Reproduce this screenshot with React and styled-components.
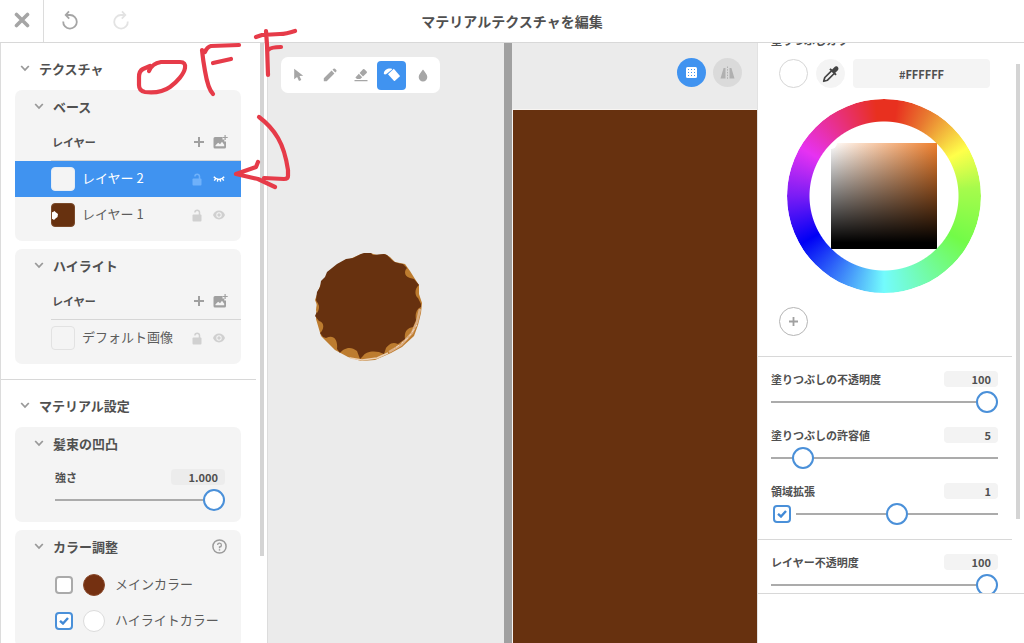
import React, { useState } from "react";
import styled, { createGlobalStyle, css } from "styled-components";

const GlobalStyle = createGlobalStyle`
  *, *::before, *::after { box-sizing: border-box; }
  body {
    margin: 0;
    background: #fff;
    color: #505050;
    font-family: "Noto Sans CJK JP", "Noto Sans", sans-serif;
    font-size: 13px;
  }
  button, input { font: inherit; color: inherit; margin: 0; }
  button { border: 0; padding: 0; background: none; cursor: pointer; }
  h1, h2, h3 { margin: 0; font-weight: 700; }
  svg { display: block; }
`;

const BLUE = "#4093f0";
const BROWN = "#67310f";

/* ---------- page frame ---------- */

const Page = styled.div`
  position: relative;
  display: flex;
  flex-direction: column;
  height: 100vh;
  overflow: hidden;
`;

const Header = styled.header`
  display: grid;
  grid-template-columns: 1fr auto 1fr;
  align-items: center;
  flex: none;
  height: 43px;
  border-bottom: 1px solid #d8d8d8;
`;

const HeaderActions = styled.div`
  display: flex;
  height: 42px;
`;

const HeaderButton = styled.button`
  display: grid;
  place-items: center;
  width: ${(p) => (p.$divided ? 44 : 51)}px;
  padding-bottom: 2px;
  color: ${(p) => (p.disabled ? "#e3e3e3" : "#a5a5a5")};
  ${(p) => p.$divided && css`border-right: 1px solid #dcdcdc;`}
`;

const PageTitle = styled.h1`
  font-size: 14px;
  line-height: 20px;
`;

const Workspace = styled.main`
  flex: 1;
  min-height: 0;
  display: grid;
  grid-template-columns: 268px 27fr 8px 28fr 267px;
`;

/* ---------- left panel ---------- */

const SidePanel = styled.aside`
  display: flex;
  justify-content: space-between;
  min-height: 0;
  overflow: hidden;
  padding-right: 3px;
  border-left: 1px solid #dcdcdc;
  border-right: 1px solid #dcdcdc;
`;

const SideContent = styled.div`
  flex: none;
  width: 255px;
`;

const ScrollThumb = styled.div`
  flex: none;
  width: 4px;
  height: ${(p) => p.$size};
  margin-top: ${(p) => p.$top || 0}px;
  background: #d4d4d4;
`;

const Section = styled.section`
  padding: 8px 15px 15px 14px;
  border-bottom: 1px solid #d8d8d8;
`;

const SectionTitle = styled.h2`
  display: flex;
  align-items: center;
  gap: 9px;
  height: 34px;
  margin-bottom: 5px;
  padding-left: 5px;
  font-size: 13px;
`;

const CardList = styled.div`
  display: flex;
  flex-direction: column;
  gap: 8px;
`;

const Card = styled.div`
  padding-bottom: ${(p) => (p.$fields ? 11 : 8)}px;
  border-radius: 7px;
  background: #f4f4f4;
`;

const CardTitle = styled.h3`
  display: flex;
  align-items: center;
  gap: 9px;
  height: 32px;
  margin-bottom: 2px;
  padding: 0 14px 0 19px;
  font-size: 13px;
`;

const HelpButton = styled.button`
  margin-left: auto;
  color: #9b9b9b;
`;

const LayerHeader = styled.div`
  display: flex;
  align-items: center;
  gap: 5px;
  height: 37px;
  margin-left: 36px;
  padding: 0 13px 0 1px;
  border-bottom: 1px solid #d6d6d6;
  color: #a0a0a0;
`;

const LayerCaption = styled.span`
  flex: 1;
  color: #505050;
  font-size: 11px;
  font-weight: 700;
`;

const LayerRow = styled.div`
  display: flex;
  align-items: center;
  height: 36px;
  padding: 0 14px 0 36px;
  color: ${(p) => (p.$selected ? "#fff" : "#5c5c5c")};
  background: ${(p) => (p.$selected ? BLUE : "transparent")};
`;

const LayerThumb = styled.span`
  width: 24px;
  height: 24px;
  margin-right: 7px;
  overflow: hidden;
  border: 1px solid ${(p) => p.$edge};
  border-radius: 4px;
  background: ${(p) => p.$fill};
`;

const LayerName = styled.span`
  flex: 1;
  font-size: 13px;
  line-height: 20px;
  padding-bottom: 2px;
`;

const IconButton = styled.button`
  display: grid;
  place-items: center;
  width: 16px;
  height: 20px;
  color: ${(p) => p.$tone || "inherit"};
  margin-left: ${(p) => p.$gap || 0}px;
`;

const ColorRow = styled.div`
  display: flex;
  align-items: center;
  gap: 10px;
  height: 36px;
  padding-left: 40px;
  color: #5c5c5c;
`;

const ColorRows = styled.div`
  padding-top: 3px;
`;

const ColorName = styled.label`
  line-height: 20px;
  padding-bottom: 2px;
`;

const ColorDot = styled.button`
  width: 22px;
  height: 22px;
  border: 1px solid ${(p) => p.$edge};
  border-radius: 50%;
  background: ${(p) => p.$fill};
`;

/* ---------- form controls ---------- */

const Field = styled.div`
  display: grid;
  gap: 4px;
`;

const CardField = styled.div`
  padding: 8px 16px 0 40px;
`;

const FieldHead = styled.div`
  display: flex;
  align-items: center;
  justify-content: space-between;
  height: 16px;
`;

const FieldLabel = styled.label`
  font-size: 11px;
  line-height: 16px;
  font-weight: 700;
`;

const NumberBox = styled.input`
  width: 54px;
  height: 16px;
  padding: 0 7px 0 0;
  border: 0;
  border-radius: 4px;
  background: ${(p) => (p.$dark ? "#ececec" : "#f3f3f3")};
  font-size: 11px;
  line-height: 16px;
  font-weight: 700;
  text-align: right;
`;

const SliderLine = styled.div`
  display: flex;
  align-items: center;
  gap: 5px;
  padding-left: ${(p) => (p.$inset ? 2 : 0)}px;
`;

const Slider = styled.input`
  appearance: none;
  flex: 1;
  min-width: 0;
  height: 22px;
  background: transparent;
  &::-webkit-slider-runnable-track {
    height: 2px;
    background: #ababab;
  }
  &::-webkit-slider-thumb {
    appearance: none;
    width: 22px;
    height: 22px;
    margin-top: -10px;
    border: 2px solid #4a90d9;
    border-radius: 50%;
    background: #fff;
  }
`;

const CheckFrame = styled.span`
  display: grid;
  place-items: center;
  flex: none;
  color: #4189d6;
  & > * { grid-area: 1 / 1; }
  & > svg { pointer-events: none; }
`;

const CheckInput = styled.input`
  appearance: none;
  width: 18px;
  height: 18px;
  border: 2px solid #aaa;
  border-radius: 4px;
  background: #fff;
  &:checked { border-color: #4a90d9; }
  &:not(:checked) + svg { visibility: hidden; }
`;

/* ---------- canvases ---------- */

const Canvas = styled.section`
  position: relative;
  min-width: 0;
  padding: 14px 0 0 13px;
  overflow: hidden;
  background: #ebebeb;
`;

const Toolbar = styled.div`
  display: inline-flex;
  align-items: center;
  gap: 2px;
  height: 36px;
  padding: 0 3px;
  border-radius: 7px;
  background: #fff;
`;

const ToolButton = styled.button`
  display: grid;
  place-items: center;
  width: 29px;
  height: 29px;
  border-radius: 4px;
  color: ${(p) => (p.$active ? "#fff" : "#a6a6a6")};
  background: ${(p) => (p.$active ? BLUE : "transparent")};
`;

const Artwork = styled.svg`
  position: absolute;
  left: 44px;
  top: 208px;
`;

const Splitter = styled.div`
  background: #a0a0a0;
`;

const Preview = styled.section`
  display: flex;
  flex-direction: column;
  min-width: 0;
  background: #ebebeb;
`;

const PreviewBar = styled.div`
  display: flex;
  justify-content: flex-end;
  gap: 7px;
  height: 66px;
  padding: 15px 15px 0 0;
`;

const RoundToggle = styled.button`
  display: grid;
  place-items: center;
  width: 29px;
  height: 29px;
  border-radius: 50%;
  color: ${(p) => (p.$active ? "#fff" : "#b0b0b0")};
  background: ${(p) => (p.$active ? BLUE : "#dadada")};
`;

const TextureSurface = styled.div`
  flex: 1;
  border-top: 1px solid #f8f5f2;
  border-left: 1px solid #f8f5f2;
  background: ${BROWN};
`;

/* ---------- right panel ---------- */

const ToolPanel = styled.aside`
  display: flex;
  flex-direction: column;
  min-height: 0;
  border-left: 1px solid #e2e2e2;
`;

const ToolScroll = styled.div`
  display: flex;
  flex: 1;
  min-height: 0;
  overflow: hidden;
  padding-right: 4px;
`;

const ToolContent = styled.div`
  flex: 1;
  margin-right: 4px;
`;

const ToolFooter = styled.div`
  flex: none;
  height: 50px;
  border-top: 1px solid #d8d8d8;
`;

const ColorSection = styled.div`
  margin-top: -11px;
  padding: 0 22px 20px 21px;
  border-bottom: 1px solid #d8d8d8;
`;

const ColorCaption = styled.h2`
  margin: 0 -8px 11px;
  font-size: 11px;
  line-height: 16px;
`;

const ColorBar = styled.div`
  display: flex;
  gap: 8px;
`;

const CircleButton = styled.button`
  display: grid;
  place-items: center;
  flex: none;
  width: 29px;
  height: 29px;
  border: 1px solid ${(p) => p.$edge};
  border-radius: 50%;
  background: ${(p) => p.$fill || "#fff"};
  color: ${(p) => p.$ink || "#a0a0a0"};
`;

const HexInput = styled.input`
  width: 137px;
  height: 29px;
  border: 0;
  border-radius: 4px;
  background: #f4f4f4;
  font-size: 11px;
  font-weight: 700;
  text-align: center;
`;

const WheelBox = styled.div`
  display: grid;
  place-items: center;
  width: 194px;
  height: 194px;
  margin: 11px 0 14px 8px;
  & > * { grid-area: 1 / 1; }
`;

const HueRing = styled.div`
  width: 100%;
  height: 100%;
  border-radius: 50%;
  background: conic-gradient(
    #e8301f 0deg, #e8301f 8deg, #e87a30 28deg, #ffff4a 60deg, #a6fb4c 85deg, #72fb48 120deg,
    #73fbfd 180deg, #0000f5 240deg, #7a1cf5 270deg, #e632f2 300deg, #e8308f 325deg, #e8301f 355deg
  );
  mask: radial-gradient(circle, transparent 74px, #000 75px);
`;

const ShadeSquare = styled.div`
  width: 106px;
  height: 106px;
  background:
    linear-gradient(to bottom, transparent, #000 94%),
    linear-gradient(to right, #fff, #ee7f2d);
`;

const ToolFields = styled.div`
  display: grid;
  gap: 14px;
  padding: 14px 14px 14px 13px;
  border-bottom: 1px solid #d8d8d8;
  &:last-child { border-bottom: 0; }
`;

/* ---------- hand-written note ---------- */

const Scribble = styled.svg`
  position: absolute;
  left: 130px;
  top: 24px;
  pointer-events: none;
`;

/* ---------- icons ---------- */

const Chevron = () => (
  <svg width="10" height="8" viewBox="0 0 10 8" fill="none" stroke="#999" strokeWidth="1.8">
    <path d="M1.2 2 5 6l3.800-4" />
  </svg>
);

const CloseIcon = () => (
  <svg width="16" height="16" viewBox="0 0 16 16" stroke="currentColor" strokeWidth="3.600" strokeLinecap="round">
    <path d="M2.500 2.500 13.500 13.500M13.500 2.500 2.500 13.500" />
  </svg>
);

const TurnIcon = ({ flip }) => (
  <svg width="18" height="20" viewBox="0 0 18 20" fill="none" stroke="currentColor" strokeWidth="1.800">
    <g transform={flip ? "translate(18 0) scale(-1 1)" : undefined}>
      <path d="M2.200 11.500A6.800 6.800 0 1 0 9 5H5.500" />
      <path d="M8 1.400 4.700 5 8.200 8.600" />
    </g>
  </svg>
);

const PlusIcon = ({ size = 10 }) => (
  <svg width={size} height={size} viewBox="0 0 10 10" stroke="currentColor" strokeWidth="2">
    <path d="M5 0v10M0 5h10" />
  </svg>
);

const ImageAddIcon = () => (
  <svg width="15" height="14" viewBox="0 0 15 14" fill="currentColor">
    <path fillRule="evenodd" d="M2 2h7.500v2.500h1.800v2H13V12a1.500 1.500 0 0 1-1.500 1.500H2A1.500 1.500 0 0 1 .5 12V3.500A1.500 1.500 0 0 1 2 2ZM2.500 11.300h8.700V9.800L9 6.800l-2 2.500-1.800-1.500-2.700 2.500Z" />
    <path d="M11.500 0h1.200v1.900h2v1.200h-2V5h-1.200V3.100h-2V1.900h2z" />
  </svg>
);

const LockIcon = () => (
  <svg width="10" height="13" viewBox="0 0 10 13">
    <rect x="0.500" y="5.500" width="9" height="7" rx="1" fill="currentColor" />
    <path d="M7.500 6V3.500a2.300 2.300 0 0 0-4.600 0" fill="none" stroke="currentColor" strokeWidth="1.500" />
  </svg>
);

const EyeIcon = () => (
  <svg width="12" height="10" viewBox="0 0 12 10" fill="currentColor">
    <path fillRule="evenodd" d="M6 .6C3.200.6 1 2.400 0 5c1 2.600 3.200 4.400 6 4.400S11 7.600 12 5C11 2.400 8.800.6 6 .6Zm0 7.100a2.700 2.700 0 1 1 0-5.400 2.700 2.700 0 0 1 0 5.400Z" />
    <circle cx="6" cy="5" r="1.700" />
  </svg>
);

const EyeClosedIcon = () => (
  <svg width="12" height="10" viewBox="0 0 12 10" fill="none" stroke="currentColor" strokeWidth="1.400">
    <path d="M.8 2.800C3.500 6.200 8.500 6.200 11.200 2.800M2.600 4.600 1.300 6.600M9.400 4.600l1.300 2M4.800 5.400 4.400 7.600M7.200 5.400l.4 2.200" />
  </svg>
);

const HelpIcon = () => (
  <svg width="15" height="15" viewBox="0 0 15 15" fill="none" stroke="currentColor" strokeWidth="1.500">
    <circle cx="7.500" cy="7.500" r="6.600" />
    <path d="M5.600 6A1.900 1.900 0 1 1 7.500 8v1.200" strokeWidth="1.300" />
    <path d="M7.500 10.200v1.400" strokeWidth="1.400" />
  </svg>
);

const TickIcon = () => (
  <svg width="10" height="8" viewBox="0 0 10 8" fill="none" stroke="currentColor" strokeWidth="2.400">
    <path d="M1 3.800 4 6.500 9 1" />
  </svg>
);

const CursorIcon = () => (
  <svg width="11" height="14" viewBox="0 0 11 14" fill="currentColor">
    <path d="M1.200.8v10.400l2.900-2.300L6 13l2.300-1-1.800-3.900 3.700-.3Z" />
  </svg>
);

const PencilIcon = () => (
  <svg width="14" height="14" viewBox="0 0 14 14" fill="currentColor">
    <path d="M.8 13.200V10.300L8.600 2.600l2.800 2.800L3.700 13.200ZM9.500 1.700l1-1q.8-.6 1.500 0l1.300 1.300q.6.8 0 1.500l-1 1Z" />
  </svg>
);

const EraserIcon = () => (
  <svg width="14" height="14" viewBox="0 0 14 14" fill="currentColor">
    <path d="M5.600 5 9 1.300q.7-.6 1.400 0l2.300 2.300q.6.700 0 1.400L9 8.500ZM4.800 5.800 8.200 9.200 6.200 11H3L1.400 9.400ZM.5 12h13v1.300H.5Z" />
  </svg>
);

const BucketIcon = () => (
  <svg width="18" height="16" viewBox="0 0 18 16" fill="currentColor">
    <path d="m10.800 1.800 5.800 6.600q.5.600 0 1.100l-4.600 4.300q-.6.500-1.100 0L5 7.300Z" />
    <path d="M9.200 1.900C5.500.7 1.200 2.600.8 6.300c0 1.200 1.400 1.500 2.600.8L8.800 2.700Z" />
  </svg>
);

const DropIcon = () => (
  <svg width="10" height="13" viewBox="0 0 10 13" fill="currentColor">
    <path d="M5 .5C3.400 3 .7 5.200.7 8.100a4.300 4.300 0 0 0 8.600 0C9.300 5.200 6.600 3 5 .5Z" />
  </svg>
);

const GridIcon = () => (
  <svg width="11" height="11" viewBox="0 0 11 11">
    <rect width="11" height="11" rx="1.500" fill="currentColor" />
    {[2, 5, 8].map((x) =>
      [2, 5, 8].map((y) => <rect key={`${x}-${y}`} x={x} y={y} width="1" height="1" fill={BLUE} />)
    )}
  </svg>
);

const MirrorIcon = () => (
  <svg width="15" height="14" viewBox="0 0 15 14" fill="currentColor">
    <path d="M5.500 2v10.500H.5L3.600 2ZM9.500 2v10.500h5L11.400 2Z" />
    <path d="M7.500.5v13.500" stroke="currentColor" strokeWidth="1" strokeDasharray="1.500 1.200" />
  </svg>
);

const DropperIcon = () => (
  <svg width="18" height="18" viewBox="0 0 18 18">
    <path d="M9.500 5.800 2.800 12.500 1.700 16.300 5.500 15.200 12.200 8.500" fill="none" stroke="currentColor" strokeWidth="1.700" strokeLinejoin="round" />
    <path d="m7.300 4.600 1.300-1.300 1.500 1.300 2.500-2.600c2-2 5.200 1.100 3.300 3.200l-2.600 2.600 1.400 1.500-1.300 1.300Z" fill="currentColor" />
  </svg>
);

const BittenThumb = () => (
  <svg width="22" height="22" viewBox="0 0 22 22" fill="#fff">
    <path d="M-1 8.500 1 8 2.500 7 4 8.500 6 10 5.500 13 3.500 14.500 2 16 .5 15-1 15Z" />
  </svg>
);

const MochiArt = () => (
  <Artwork width="112" height="112" viewBox="312 251 112 112" aria-hidden="true">
    <path fill="#bd7c2f" d="M361 254 370 253 377 255 385 254 390 257 395 262 405 264 410 271 415 279 419 285 419 294 422 303 421 313 418 325 414 336 402 347 391 353 375 360 361 361 348 357 335 350 321 336 316 319 317 305 315 300 320 286 328 273 341 263Z" />
    <g fill="none" stroke="#dcae82" strokeLinejoin="round">
      <path d="M420 309 417 322 412 333 401 345 389 352" strokeWidth="2.500" />
      <path d="M388 353 377 358 362 360 350 358" stroke="#ecd0b2" strokeWidth="1.500" />
      <path d="M417 325 408 338 394 349" stroke="#f0d6c0" strokeWidth="1" strokeDasharray="2 3 4 2" />
    </g>
    <path fill={BROWN} d="M361 254 364 253 371 253 373 255 384 254 387 255 392 260C395 263 398 263 403 264L407 268C404 271 404 276 410 278L414 279 419 285C415 288 414 295 418 298L421 304 421 307C416 309 415 315 416 320L413 327C407 328 404 332 405 339L398 344C391 341 388 346 386 348L384 354C375 349 365 352 363 356L360 359 357 351C350 345 343 349 340 353L337 349C338 340 334 334 326 338L323 337 320 333C324 330 325 322 319 321L315 316 319 307 316 300 317 292 320 287 321 281 325 277 327 272 337 264 346 259 353 258Z" />
    <path d="M317 302c2 2 3 7 0 11l-1-3Z" fill="#bd7c2f" />
  </Artwork>
);

const NoteMarks = () => (
  <Scribble width="172" height="170" viewBox="130 24 172 170" fill="none" stroke="#e63b49" strokeWidth="4.200" strokeLinecap="round" strokeLinejoin="round" aria-hidden="true">
    <path d="M149 71C151 66 155 63 161 62L180 62Q186 62 185 68C184 74 177 82 170 87 163 92 154 93 145 92Q139 91 139 85L139 77Q139 71 143 69L150 66" />
    <path d="M202 50Q203 60 205 71 208 89 213 94M205 52Q207 47 211 46L239 45M213 63 231 59" />
    <path d="M266 31 267 45 268 75M256 37 262 35 280 34Q286 34 295 31M268 50Q271 47 281 47" />
    <path d="M259 117Q271 126 278 138 285 150 288 170L288 176Q288 179 284 179L264 178" />
    <path d="M258 162 256 167 236 174 258 179 275 187" />
  </Scribble>
);

/* ---------- composed controls ---------- */

function RangeField({ id, label, initial, min = 0, max, step = 1, digits = 0, dark, toggle }) {
  const [value, setValue] = useState(initial);
  const [enabled, setEnabled] = useState(true);
  const update = (e) => setValue(Number(e.target.value) || 0);
  return (
    <Field>
      <FieldHead>
        <FieldLabel htmlFor={id}>{label}</FieldLabel>
        <NumberBox $dark={dark} aria-label={label} value={value.toFixed(digits)} onChange={update} />
      </FieldHead>
      <SliderLine $inset={toggle}>
        {toggle && (
          <CheckFrame>
            <CheckInput type="checkbox" aria-label={label} checked={enabled} onChange={() => setEnabled(!enabled)} />
            <TickIcon />
          </CheckFrame>
        )}
        <Slider id={id} type="range" min={min} max={max} step={step} value={value} onChange={update} />
      </SliderLine>
    </Field>
  );
}

function ColorOption({ id, label, fill, edge, on }) {
  const [checked, setChecked] = useState(on);
  return (
    <ColorRow>
      <CheckFrame>
        <CheckInput id={id} type="checkbox" checked={checked} onChange={() => setChecked(!checked)} />
        <TickIcon />
      </CheckFrame>
      <ColorDot $fill={fill} $edge={edge} aria-label={`${label}を選択`} />
      <ColorName htmlFor={id}>{label}</ColorName>
    </ColorRow>
  );
}

function Layer({ name, fill, edge, selected, hidden, children }) {
  return (
    <LayerRow $selected={selected}>
      <LayerThumb $fill={fill} $edge={edge}>{children}</LayerThumb>
      <LayerName>{name}</LayerName>
      <IconButton aria-label="ロック" $tone={selected ? "#6fb1fa" : "#d0d0d0"}><LockIcon /></IconButton>
      <IconButton aria-label="表示" $gap={6} $tone={selected ? "#fff" : "#d0d0d0"}>
        {hidden ? <EyeClosedIcon /> : <EyeIcon />}
      </IconButton>
    </LayerRow>
  );
}

function LayerCard({ title, children }) {
  return (
    <Card>
      <CardTitle><Chevron />{title}</CardTitle>
      <LayerHeader>
        <LayerCaption>レイヤー</LayerCaption>
        <IconButton aria-label="レイヤーを追加"><PlusIcon /></IconButton>
        <IconButton aria-label="画像を追加"><ImageAddIcon /></IconButton>
      </LayerHeader>
      {children}
    </Card>
  );
}

const TOOLS = [
  ["選択", CursorIcon],
  ["ペン", PencilIcon],
  ["消しゴム", EraserIcon],
  ["塗りつぶし", BucketIcon],
  ["ぼかし", DropIcon],
];

export default function App() {
  const [tool, setTool] = useState("塗りつぶし");
  const [hex, setHex] = useState("#FFFFFF");
  return (
    <Page>
      <GlobalStyle />
      <Header>
        <HeaderActions>
          <HeaderButton $divided aria-label="閉じる"><CloseIcon /></HeaderButton>
          <HeaderButton aria-label="元に戻す"><TurnIcon /></HeaderButton>
          <HeaderButton aria-label="やり直す" disabled><TurnIcon flip /></HeaderButton>
        </HeaderActions>
        <PageTitle>マテリアルテクスチャを編集</PageTitle>
      </Header>

      <Workspace>
        <SidePanel>
          <SideContent>
            <Section>
              <SectionTitle><Chevron />テクスチャ</SectionTitle>
              <CardList>
                <LayerCard title="ベース">
                  <Layer name="レイヤー 2" fill="#f4f4f4" edge="#e6edf5" selected hidden />
                  <Layer name="レイヤー 1" fill={BROWN} edge="#7a4a2a"><BittenThumb /></Layer>
                </LayerCard>
                <LayerCard title="ハイライト">
                  <Layer name="デフォルト画像" fill="#f4f4f4" edge="#e2e2e2" />
                </LayerCard>
              </CardList>
            </Section>
            <Section>
              <SectionTitle><Chevron />マテリアル設定</SectionTitle>
              <CardList>
                <Card $fields>
                  <CardTitle><Chevron />髪束の凹凸</CardTitle>
                  <CardField>
                    <RangeField id="strength" label="強さ" initial={1} max={1} step={0.001} digits={3} dark />
                  </CardField>
                </Card>
                <Card>
                  <CardTitle>
                    <Chevron />カラー調整
                    <HelpButton aria-label="ヘルプ"><HelpIcon /></HelpButton>
                  </CardTitle>
                  <ColorRows>
                    <ColorOption id="main-color" label="メインカラー" fill="#743011" edge="#8a4a2c" on={false} />
                    <ColorOption id="highlight-color" label="ハイライトカラー" fill="#fff" edge="#dcdcdc" on />
                  </ColorRows>
                </Card>
              </CardList>
            </Section>
          </SideContent>
          <ScrollThumb $size="calc(100% - 87px)" />
        </SidePanel>

        <Canvas>
          <Toolbar>
            {TOOLS.map(([name, Icon]) => (
              <ToolButton key={name} aria-label={name} $active={tool === name} onClick={() => setTool(name)}>
                <Icon />
              </ToolButton>
            ))}
          </Toolbar>
          <MochiArt />
        </Canvas>
        <Splitter />
        <Preview>
          <PreviewBar>
            <RoundToggle $active aria-label="グリッド"><GridIcon /></RoundToggle>
            <RoundToggle aria-label="左右対称"><MirrorIcon /></RoundToggle>
          </PreviewBar>
          <TextureSurface />
        </Preview>

        <ToolPanel>
          <ToolScroll>
            <ToolContent>
              <ColorSection>
                <ColorCaption>塗りつぶしカラー</ColorCaption>
                <ColorBar>
                  <CircleButton $edge="#d6d6d6" aria-label="現在の色" />
                  <CircleButton $edge="#f4f4f4" $fill="#f4f4f4" $ink="#444" aria-label="スポイト"><DropperIcon /></CircleButton>
                  <HexInput aria-label="カラーコード" value={hex} onChange={(e) => setHex(e.target.value)} />
                </ColorBar>
                <WheelBox>
                  <HueRing />
                  <ShadeSquare />
                  <svg width="194" height="194" viewBox="0 0 194 194" aria-hidden="true">
                    <path d="m13 49 18 9" stroke="#8a20c8" strokeWidth="0.700" />
                    <circle cx="135" cy="20" r="8" fill="none" stroke="#fbe9d8" strokeWidth="1.800" />
                    <circle cx="44" cy="44" r="6" fill="#fff" />
                  </svg>
                </WheelBox>
                <CircleButton $edge="#b5b5b5" aria-label="色を追加"><PlusIcon size={9} /></CircleButton>
              </ColorSection>
              <ToolFields>
                <RangeField id="fill-opacity" label="塗りつぶしの不透明度" initial={100} max={100} />
                <RangeField id="tolerance" label="塗りつぶしの許容値" initial={5} max={50} />
                <RangeField id="expansion" label="領域拡張" initial={1} max={2} toggle />
              </ToolFields>
              <ToolFields>
                <RangeField id="layer-opacity" label="レイヤー不透明度" initial={100} max={100} />
              </ToolFields>
            </ToolContent>
            <ScrollThumb $top={21} $size="calc(100% - 95px)" />
          </ToolScroll>
          <ToolFooter />
        </ToolPanel>
      </Workspace>
      <NoteMarks />
    </Page>
  );
}
